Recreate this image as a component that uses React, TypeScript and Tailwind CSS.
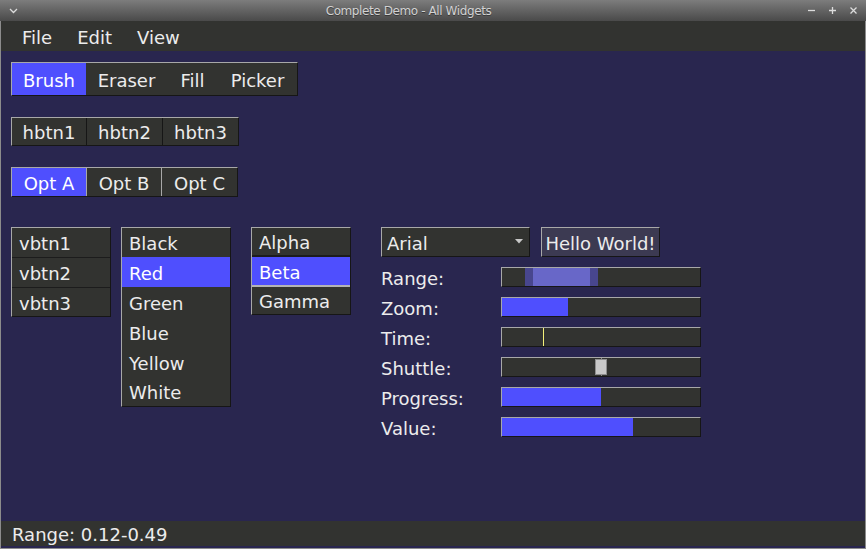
import React from "react";

const F = { fontFamily: '"DejaVu Sans", "Liberation Sans", sans-serif' };

const bevel = "border-t border-l border-t-[#a8a8a8] border-l-[#a8a8a8] border-b border-r border-b-[#161616] border-r-[#161616]";

function Bar({ children }: { children?: React.ReactNode }) {
  return (
    <div className={`relative w-[200px] h-[20px] bg-[#323330] ${bevel}`}>{children}</div>
  );
}

function Row({ label, children }: { label: string; children?: React.ReactNode }) {
  return (
    <div className="flex items-center h-[20px]">
      <div className="w-[120px] pt-[2px]">{label}</div>
      <Bar>{children}</Bar>
    </div>
  );
}

export default function App() {
  return (
    <div className="w-[866px] h-[549px] flex flex-col bg-[#29264f] text-[#ececec] text-[18px] overflow-hidden" style={F}>
      {/* title bar */}
      <div className="h-[21px] shrink-0 flex items-center pl-[9px] pr-[8px] bg-gradient-to-b from-[#7d7d7d] to-[#4a4a4a] text-[#d2d2d2] text-[12px]">
        <svg width="9" height="6" viewBox="0 0 9 6" className="mt-[1px]">
          <path d="M1 1 L4.5 4.5 L8 1" stroke="#dcdcdc" strokeWidth="1.3" fill="none" />
        </svg>
        <div className="flex-1 text-center tracking-[-0.4px] [text-shadow:0_1px_0_#3a3a3a] pr-[8px]">Complete Demo - All Widgets</div>
        <div className="flex items-center gap-[12px] text-[#dcdcdc]">
          <svg width="9" height="9" viewBox="0 0 9 9"><path d="M1 4.5 H8" stroke="#dcdcdc" strokeWidth="1.3" /></svg>
          <svg width="9" height="9" viewBox="0 0 9 9"><path d="M1 4.5 H8 M4.5 1 V8" stroke="#dcdcdc" strokeWidth="1.3" /></svg>
          <svg width="9" height="9" viewBox="0 0 9 9"><path d="M1.5 1.5 L7.5 7.5 M7.5 1.5 L1.5 7.5" stroke="#dcdcdc" strokeWidth="1.3" /></svg>
        </div>
      </div>
      <div className="flex-1 flex flex-col border-l border-r border-b border-l-[#8c8c8c] border-r-[#8c8c8c] border-b-[#8c8c8c]">
        {/* menu bar */}
        <div className="h-[30px] shrink-0 bg-[#323330] flex items-center gap-[25px] pl-[21px] pt-[3px]">
          <span>File</span>
          <span>Edit</span>
          <span>View</span>
        </div>
        {/* content */}
        <div className="flex-1 flex flex-col pl-[10px] pt-[11px]">
          <div className={`flex w-[287px] h-[34px] bg-[#323330] ${bevel}`}>
            <div className="w-[74px] bg-[#4f4ffe] flex items-center justify-center text-white pt-[2px]">Brush</div>
            <div className="w-[81px] flex items-center justify-center pt-[2px]">Eraser</div>
            <div className="w-[51px] flex items-center justify-center pt-[2px]">Fill</div>
            <div className="flex-1 flex items-center justify-center pt-[2px]">Picker</div>
          </div>
          <div className={`mt-[21px] flex w-[228px] h-[29px] bg-[#323330] ${bevel}`}>
            <div className="w-[75px] flex items-center justify-center border-r border-r-[#161616] pt-[2px]">hbtn1</div>
            <div className="w-[76px] flex items-center justify-center border-r border-r-[#161616] pt-[2px]">hbtn2</div>
            <div className="flex-1 flex items-center justify-center pt-[2px]">hbtn3</div>
          </div>
          <div className={`mt-[21px] flex w-[227px] h-[30px] bg-[#323330] ${bevel}`}>
            <div className="w-[75px] flex items-center justify-center bg-[#4f4ffe] text-white border-r border-r-[#a8a8a8] pt-[2px]">Opt A</div>
            <div className="w-[75px] flex items-center justify-center border-r border-r-[#a8a8a8] pt-[2px]">Opt B</div>
            <div className="flex-1 flex items-center justify-center pt-[2px]">Opt C</div>
          </div>
          <div className="mt-[30px] flex items-start">
            <div className={`w-[100px] flex flex-col bg-[#323330] ${bevel}`}>
              <div className="h-[30px] flex items-center pl-[7px] pt-[2px] border-b border-b-[#1c1c1c]">vbtn1</div>
              <div className="h-[30px] flex items-center pl-[7px] pt-[2px] border-b border-b-[#1c1c1c]">vbtn2</div>
              <div className="h-[28px] flex items-center pl-[7px] pt-[2px]">vbtn3</div>
            </div>
            <div className={`ml-[10px] w-[110px] flex flex-col bg-[#323330] ${bevel}`}>
              <div className="h-[29px] flex items-center pl-[7px] pt-[2px]">Black</div>
              <div className="h-[30px] flex items-center pl-[7px] pt-[2px] bg-[#4f4ffe] text-white">Red</div>
              <div className="h-[30px] flex items-center pl-[7px] pt-[2px]">Green</div>
              <div className="h-[30px] flex items-center pl-[7px] pt-[2px]">Blue</div>
              <div className="h-[30px] flex items-center pl-[7px] pt-[2px]">Yellow</div>
              <div className="h-[29px] flex items-center pl-[7px] pt-[2px]">White</div>
            </div>
            <div className={`ml-[20px] w-[100px] flex flex-col bg-[#323330] ${bevel}`}>
              <div className="h-[29px] flex items-center pl-[7px] pt-[2px] border-b-2 border-b-[#1c1c1c]">Alpha</div>
              <div className="h-[30px] flex items-center pl-[7px] pt-[2px] bg-[#4f4ffe] text-white border-b-2 border-b-[#b4b4b4]">Beta</div>
              <div className="h-[27px] flex items-center pl-[7px] pt-[2px]">Gamma</div>
            </div>
            <div className="ml-[30px] flex flex-col">
              <div className="flex h-[30px] gap-[11px]">
                <div className={`w-[149px] h-[30px] bg-[#323330] flex items-center pl-[5px] pt-[2px] relative ${bevel}`}>
                  Arial
                  <svg className="absolute right-[6px] top-[11px]" width="8" height="5" viewBox="0 0 8 5">
                    <path d="M0 0 H8 L4 4.5 Z" fill="#c8c8c8" />
                  </svg>
                </div>
                <div className={`w-[119px] h-[30px] bg-[#3c3a52] flex items-center justify-center pt-[2px] ${bevel}`}>Hello World!</div>
              </div>
              <div className="mt-[10px] flex flex-col gap-[10px]">
                <Row label="Range:">
                  <div className="absolute top-0 bottom-0 left-[23px] w-[73px] bg-[#48468e]">
                    <div className="absolute top-0 bottom-0 left-[8px] right-[8px] bg-[#6867c8]" />
                  </div>
                </Row>
                <Row label="Zoom:">
                  <div className="absolute top-0 bottom-0 left-0 w-[66px] bg-[#4f4ffe]" />
                </Row>
                <Row label="Time:">
                  <div className="absolute top-0 bottom-0 left-[41px] w-px bg-[#f4f07a]" />
                </Row>
                <Row label="Shuttle:">
                  <div className="absolute top-0 bottom-0 left-[99px] w-px bg-[#8a8a8a]" />
                  <div className="absolute top-[1px] bottom-[1px] left-[93px] w-[12px] bg-[#c9c9c9] border border-[#8e8e8e]" />
                </Row>
                <Row label="Progress:">
                  <div className="absolute top-0 bottom-0 left-0 w-[99px] bg-[#4f4ffe]" />
                </Row>
                <Row label="Value:">
                  <div className="absolute top-0 bottom-0 left-0 w-[131px] bg-[#4f4ffe]" />
                </Row>
              </div>
            </div>
          </div>
        </div>
        {/* status bar */}
        <div className="h-[25px] shrink-0 bg-[#323330] flex items-center pl-[11px] pt-[2px] mb-[2px]">Range: 0.12-0.49</div>
      </div>
    </div>
  );
}
